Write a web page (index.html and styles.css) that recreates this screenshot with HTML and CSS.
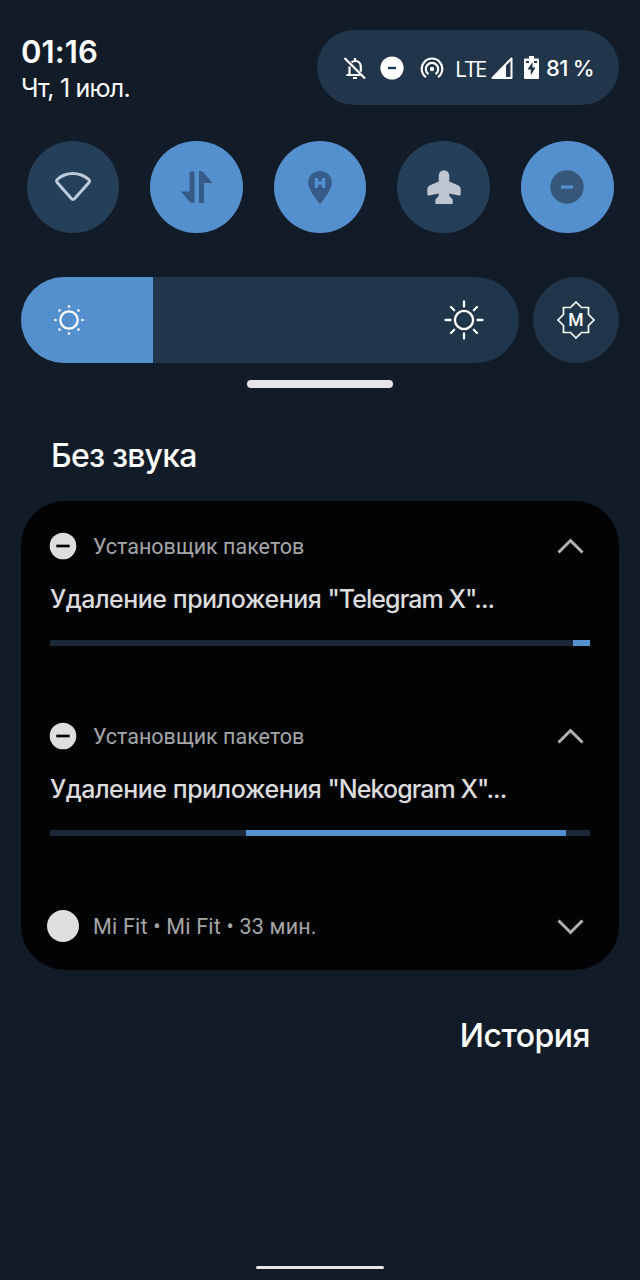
FILE: index.html
```html
<!DOCTYPE html>
<html lang="ru">
<head>
    <meta charset="utf-8">
    <title>Шторка уведомлений</title>
    <link rel="stylesheet" href="styles.css">
</head>
<body>
    <header class="top">
        <div class="clock">
            <div class="time">01:16</div>
            <div class="date">Чт, 1 июл.</div>
        </div>
        <div class="status">
            <svg class="bell" width="24" height="24" viewBox="0 0 24 24" fill="none" stroke="#fff" stroke-width="2.200">
                <path d="M6.500 19v-8.500M8.500 6.300Q10 5 12.200 5c3.200 0 5.600 2.400 5.600 5.800v5M3.500 19h14.500"/>
                <path d="M12 2v3M10 22h4M1.500 2l20.500 20.500"/>
            </svg>
            <svg class="dnd" width="24" height="24" viewBox="0 0 24 24">
                <circle cx="12" cy="12" r="11.600" fill="#fff"/>
                <path d="M8 12h8" stroke="#21354b" stroke-width="2.400"/>
            </svg>
            <svg class="hotspot" width="24" height="24" viewBox="0 0 24 24" fill="none" stroke="#fff" stroke-width="2.100">
                <circle cx="12" cy="13" r="2.200" fill="#fff" stroke="none"/>
                <path d="M8.500 18.200a6.200 6.200 0 1 1 7 0M6 21.200a10.300 10.300 0 1 1 12 0"/>
            </svg>
            <span class="lte">LTE</span>
            <svg class="signal" width="22" height="22" viewBox="0 0 22 22">
                <path d="M1.500 21L20.500 1.500V21z" fill="none" stroke="#fff" stroke-width="2" stroke-linejoin="round"/>
                <path d="M1 21.500L15 7v14.500z" fill="#fff"/>
            </svg>
            <svg class="battery" width="15" height="23" viewBox="0 0 15 23">
                <path d="M5 0h5v2.500h4q1 0 1 1v18.500q0 1-1 1H1q-1 0-1-1V3.500q0-1 1-1h4z" fill="#fff"/>
                <path d="M8.500 6L3.500 13.500h3.300v5.700L11.600 11.500H8.500zM2 5h3v2H2zM10 5h3v2h-3z" fill="#21354b"/>
            </svg>
            <span class="percent">81 %</span>
        </div>
    </header>

    <div class="tiles">
        <div class="tile">
            <svg width="48" height="48" viewBox="0 0 48 48">
                <path d="M8.200 16.500C17 8.500 30.500 8.500 39.800 16.500q1.300 1.400.2 3L25.700 35.500q-1.700 1.800-3.400 0L8.200 19.500q-1.200-1.700 0-3z" fill="none" stroke="#bdc9da" stroke-width="3"/>
            </svg>
        </div>
        <div class="tile on">
            <svg width="48" height="48" viewBox="0 0 48 48">
                <path d="M17.500 9.500q0-1 1-1h3q1 0 1 1v29q0 1.500-2 1.500-1.500 0-2.700-1L9 28.500h8.500zM27 9q0-1 1-1 1.500 0 3 1l9.500 11h-8.500v19q0 1-1 1h-3q-1 0-1-1z" fill="#365b88"/>
            </svg>
        </div>
        <div class="tile on">
            <svg width="48" height="48" viewBox="0 0 48 48">
                <path d="M24 8c-6.600 0-11.800 5-11.800 11.500C12.200 28 24 41 24 41s11.800-13 11.800-21.500C35.800 13 30.600 8 24 8z" fill="#365b88"/>
                <path d="M20.500 15v10M27.500 15v10M20.500 20h7" stroke="#5590ce" stroke-width="3.400"/>
            </svg>
        </div>
        <div class="tile">
            <svg width="48" height="48" viewBox="0 0 48 48">
                <path d="M18.700 12.500a5.300 5.300 0 0 1 10.600 0V18.500L38.500 22.500q2.200 1.200 2.200 3.500v5.500q-.2 1.300-1.700 1l-9.700-2v2.500l2.800 2.800q.7.800.7 2v2q0 1.200-1.200 1.200H16.500q-1.200 0-1.200-1.200v-2q0-1.200.7-2l2.700-2.800v-2.500l-9.700 2q-1.500.3-1.700-1V26q0-2.300 2.200-3.500l9.200-4z" fill="#bdc6d1"/>
            </svg>
        </div>
        <div class="tile on">
            <svg width="48" height="48" viewBox="0 0 48 48">
                <circle cx="24" cy="24" r="16.700" fill="#365779"/>
                <path d="M18 24h12" stroke="#5590ce" stroke-width="3.400"/>
            </svg>
        </div>
    </div>

    <div class="brightness">
        <div class="slider">
            <div class="slider-fill">
                <svg width="32" height="32" viewBox="0 0 32 32">
                    <circle cx="16" cy="16" r="8.700" fill="none" stroke="#fff" stroke-width="2.300"/>
                    <path d="M16 2.500v0M16 29.500v0M2.500 16h0M29.500 16h0M6.500 6.500h0M25.500 6.500h0M6.500 25.500h0M25.500 25.500h0" stroke="#fff" stroke-width="2.600" stroke-linecap="round"/>
                </svg>
            </div>
            <svg width="42" height="42" viewBox="0 0 42 42" fill="none" stroke="#fff" stroke-width="2.300" stroke-linecap="round">
                <circle cx="21" cy="21" r="9.100"/>
                <path d="M21 2.500v5M21 34.500v5M2.500 21h5M34.500 21h5M8 8l3.200 3.200M30.800 30.800L34 34M34 8l-3.200 3.200M11.200 30.800L8 34"/>
            </svg>
        </div>
        <div class="auto">
            <svg width="42" height="42" viewBox="0 0 42 42">
                <path d="M21 3l5.500 5.500H33.500V15.500L39 21l-5.500 5.500V33.500H26.500L21 39l-5.500-5.500H8.500V26.500L3 21l5.500-5.500V8.500H15.500z" fill="none" stroke="#fff" stroke-width="1.700"/>
                <text class="auto-label" x="21" y="27.300" text-anchor="middle">M</text>
            </svg>
        </div>
    </div>
    <div class="handle"></div>

    <h2 class="section">Без звука</h2>
    <main class="card">
        <section class="notice">
            <div class="row">
                <svg class="app-icon" width="32" height="32" viewBox="0 0 32 32">
                    <circle cx="16" cy="16" r="13.300" fill="#dedede"/>
                    <path d="M9.300 16h13.400" stroke="#020305" stroke-width="2.700"/>
                </svg>
                <span class="app">Установщик пакетов</span>
                <svg class="chevron" width="28" height="28" viewBox="0 0 28 28"><path d="M2.500 20.500l12-12 12 12"/></svg>
            </div>
            <div class="title">Удаление приложения <span class="quoted">"Telegram X"...</span></div>
            <div class="progress"><div class="bar bar-first"></div></div>
        </section>
        <section class="notice">
            <div class="row">
                <svg class="app-icon" width="32" height="32" viewBox="0 0 32 32">
                    <circle cx="16" cy="16" r="13.300" fill="#dedede"/>
                    <path d="M9.300 16h13.400" stroke="#020305" stroke-width="2.700"/>
                </svg>
                <span class="app">Установщик пакетов</span>
                <svg class="chevron" width="28" height="28" viewBox="0 0 28 28"><path d="M2.500 20.500l12-12 12 12"/></svg>
            </div>
            <div class="title">Удаление приложения <span class="quoted">"Nekogram X"...</span></div>
            <div class="progress"><div class="bar bar-second"></div></div>
        </section>
        <section class="notice">
            <div class="row">
                <svg class="app-icon" width="32" height="32" viewBox="0 0 32 32"><circle cx="16" cy="16" r="16" fill="#dedede"/></svg>
                <span class="app fit">Mi Fit • Mi Fit • 33 мин.</span>
                <svg class="chevron" width="28" height="28" viewBox="0 0 28 28"><path d="M2.500 8.500l12 12 12-12"/></svg>
            </div>
        </section>
    </main>
    <div class="history">История</div>
    <div class="nav"></div>
</body>
</html>
```
FILE: styles.css
```css
* {
    box-sizing: border-box;
}
body {
    margin: 0;
    height: 1280px;
    padding: 30px 21px 11px;
    display: flex;
    flex-direction: column;
    overflow: hidden;
    background: #121c28;
    color: #fff;
    font-family: Inter, Roboto, sans-serif;
    white-space: nowrap;
}
svg {
    display: block;
    flex: none;
}
.top {
    display: flex;
    justify-content: space-between;
    height: 75px;
}
.time {
    margin-top: 3px;
    font-size: 31px;
    line-height: 37px;
    font-weight: 600;
    letter-spacing: 0.1px;
}
.date {
    font-size: 25px;
    line-height: 37px;
    letter-spacing: -0.8px;
}
.status {
    display: flex;
    align-items: center;
    width: 302px;
    padding-left: 26px;
    border-radius: 38px;
    background: #21354b;
    font-size: 23px;
}
.dnd {
    margin-left: 13px;
}
.hotspot {
    margin-left: 16px;
}
.lte {
    width: 35px;
    margin-left: 11px;
    font-family: "Open Sans", sans-serif;
    font-size: 22px;
    letter-spacing: -1.8px;
}
.signal {
    margin-left: 1px;
}
.battery {
    margin-left: 11px;
}
.percent {
    margin-left: 7px;
    font-weight: 500;
    font-size: 22px;
    letter-spacing: -0.7px;
}
.tiles {
    display: flex;
    justify-content: space-between;
    margin: 35.5px 5.5px 0;
}
.tile {
    display: flex;
    align-items: center;
    justify-content: center;
    width: 92.5px;
    height: 92.5px;
    border-radius: 50%;
    background: #263f58;
}
.tile.on {
    background: #5590ce;
}
.brightness {
    display: flex;
    justify-content: space-between;
    margin-top: 44px;
}
.slider {
    display: flex;
    align-items: center;
    justify-content: space-between;
    width: 498px;
    height: 86px;
    padding-right: 34px;
    border-radius: 43px;
    overflow: hidden;
    background: #21354b;
}
.slider-fill {
    display: flex;
    align-items: center;
    width: 132px;
    height: 100%;
    padding-left: 32px;
    background: #5590ce;
}
.auto {
    display: flex;
    align-items: center;
    justify-content: center;
    width: 86px;
    height: 86px;
    border-radius: 50%;
    background: #21354b;
}
.auto-label {
    fill: #fff;
    font-family: Roboto, sans-serif;
    font-size: 17.5px;
    font-weight: 500;
}
.handle {
    width: 146px;
    height: 8px;
    margin: 17px auto 0;
    border-radius: 4px;
    background: #e6e6e6;
}
.section {
    margin: 48px 0 0 30px;
    font-size: 32px;
    line-height: 40px;
    font-weight: 500;
    letter-spacing: -0.8px;
}
.card {
    height: 469px;
    margin-top: 25px;
    padding: 29px 29px 0;
    border-radius: 44px;
    background: #020305;
}
.notice {
    height: 190px;
}
.row {
    display: flex;
    align-items: center;
    height: 32px;
    margin: 0 6px 0 -3px;
}
.app {
    flex: 1;
    margin-left: 14px;
    font-family: Roboto, sans-serif;
    font-size: 21.5px;
    color: #a5a6a7;
}
.fit {
    letter-spacing: 0.2px;
}
.chevron {
    fill: none;
    stroke: #b0b1b2;
    stroke-width: 3;
}
.title {
    margin-top: 21px;
    font-size: 25px;
    line-height: 32px;
    font-weight: 500;
    letter-spacing: -0.5px;
    color: #dcdcdd;
}
.quoted {
    letter-spacing: -0.95px;
}
.progress {
    height: 6px;
    margin-top: 25px;
    background: #1a2837;
}
.bar {
    height: 6px;
    background: #5590ce;
}
.bar-first {
    width: 17px;
    margin-left: auto;
}
.bar-second {
    width: 320px;
    margin-left: 196px;
}
.history {
    margin: 46px 29px 0 auto;
    font-size: 32px;
    line-height: 40px;
    font-weight: 500;
    letter-spacing: -0.5px;
}
.nav {
    width: 128px;
    height: 3px;
    margin: auto auto 0;
    border-radius: 2px;
    background: #e6e6e6;
}
```
